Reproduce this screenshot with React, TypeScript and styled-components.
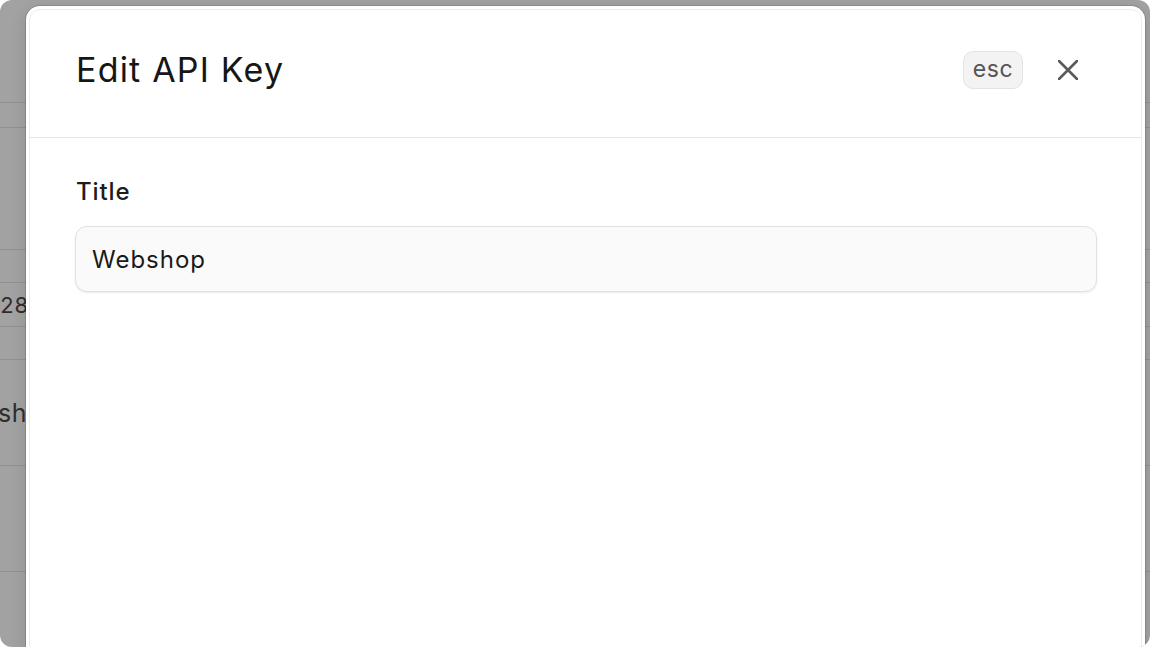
import styled, { createGlobalStyle } from "styled-components";

const GlobalStyle = createGlobalStyle`
  html, body {
    margin: 0;
    padding: 0;
    background: #ffffff;
    font-family: Inter, "Noto Sans", "Liberation Sans", sans-serif;
  }
  * {
    box-sizing: border-box;
  }
`;

const rows = [
  { height: 103 },
  { height: 25 },
  { height: 122 },
  { height: 33 },
  { height: 44, text: "1428", size: 22, shift: -24 },
  { height: 33 },
  { height: 106, text: "Webshop", size: 25, shift: -57 },
  { height: 106 },
];

const App = () => {
  return (
    <>
      <GlobalStyle />
      <Screen>
        <Backdrop>
          {rows.map((row, i) => (
            <BackRow key={i} $height={row.height}>
              {row.text && (
                <BackText $size={row.size ?? 22} $shift={row.shift ?? 0}>
                  {row.text}
                </BackText>
              )}
            </BackRow>
          ))}
        </Backdrop>

        <Modal>
          <Panel>
            <Header>
              <Heading>Edit API Key</Heading>
              <HeaderActions>
                <EscBadge>esc</EscBadge>
                <CloseButton aria-label="Close">
                  <svg width="20" height="20" viewBox="0 0 20 20" fill="none">
                    <path
                      d="M1 1L19 19M19 1L1 19"
                      stroke="#5b5b5b"
                      strokeWidth="2.6"
                      strokeLinecap="round"
                    />
                  </svg>
                </CloseButton>
              </HeaderActions>
            </Header>
            <Body>
              <Label htmlFor="title">Title</Label>
              <Input id="title" defaultValue="Webshop" />
            </Body>
          </Panel>
        </Modal>
      </Screen>
    </>
  );
};

const Screen = styled.div`
  position: relative;
  width: 1150px;
  height: 647px;
  border-radius: 12px;
  overflow: hidden;
  background: #a2a2a2;
`;

const Backdrop = styled.div`
  display: flex;
  flex-direction: column;
`;

const BackRow = styled.div<{ $height: number }>`
  display: flex;
  align-items: center;
  height: ${(p) => p.$height}px;
  border-bottom: 1px solid #909090;
  overflow: hidden;
`;

const BackText = styled.span<{ $size: number; $shift: number }>`
  margin-left: ${(p) => p.$shift}px;
  font-size: ${(p) => p.$size}px;
  letter-spacing: 0.6px;
  color: #2e2e2e;
  white-space: nowrap;
`;

const Modal = styled.div`
  position: absolute;
  top: 6px;
  left: 26px;
  right: 5px;
  bottom: -30px;
  padding: 3px;
  background: #ffffff;
  border-radius: 14px;
  box-shadow: 0 0 0 1px rgba(0, 0, 0, 0.12), 0 4px 16px rgba(0, 0, 0, 0.12);
`;

const Panel = styled.div`
  height: 100%;
  border: 1px solid #ececec;
  border-radius: 11px;
  display: flex;
  flex-direction: column;
`;

const Header = styled.div`
  display: flex;
  align-items: center;
  justify-content: space-between;
  height: 128px;
  padding: 0 53px 8px 46px;
  border-bottom: 1px solid #e4e4e4;
`;

const Heading = styled.h2`
  margin: 0;
  font-size: 34px;
  font-weight: 400;
  color: #161616;
  letter-spacing: 1.2px;
`;

const HeaderActions = styled.div`
  display: flex;
  align-items: center;
  gap: 25px;
`;

const EscBadge = styled.span`
  display: flex;
  align-items: center;
  justify-content: center;
  width: 60px;
  height: 38px;
  border: 1px solid #e3e3e3;
  border-radius: 10px;
  background: #f3f3f3;
  font-size: 23px;
  letter-spacing: 0.6px;
  color: #555555;
  padding-bottom: 2px;
`;

const CloseButton = styled.button`
  display: flex;
  align-items: center;
  justify-content: center;
  width: 40px;
  height: 40px;
  padding: 0;
  border: none;
  background: transparent;
  cursor: pointer;
`;

const Body = styled.div`
  display: flex;
  flex-direction: column;
  padding: 39px 44px 0 45px;
`;

const Label = styled.label`
  font-size: 24px;
  line-height: 29px;
  font-weight: 500;
  letter-spacing: 0.9px;
  color: #1d1d1d;
  margin-bottom: 20px;
  padding-left: 1px;
`;

const Input = styled.input`
  height: 66px;
  padding: 0 16px;
  border: 1px solid #e1e1e1;
  border-radius: 12px;
  background: #fafafa;
  box-shadow: 0 1px 2px rgba(0, 0, 0, 0.08);
  font-family: Inter, "Noto Sans", "Liberation Sans", sans-serif;
  font-size: 24px;
  letter-spacing: 1px;
  color: #1a1a1a;
  outline: none;
`;

export default App;
